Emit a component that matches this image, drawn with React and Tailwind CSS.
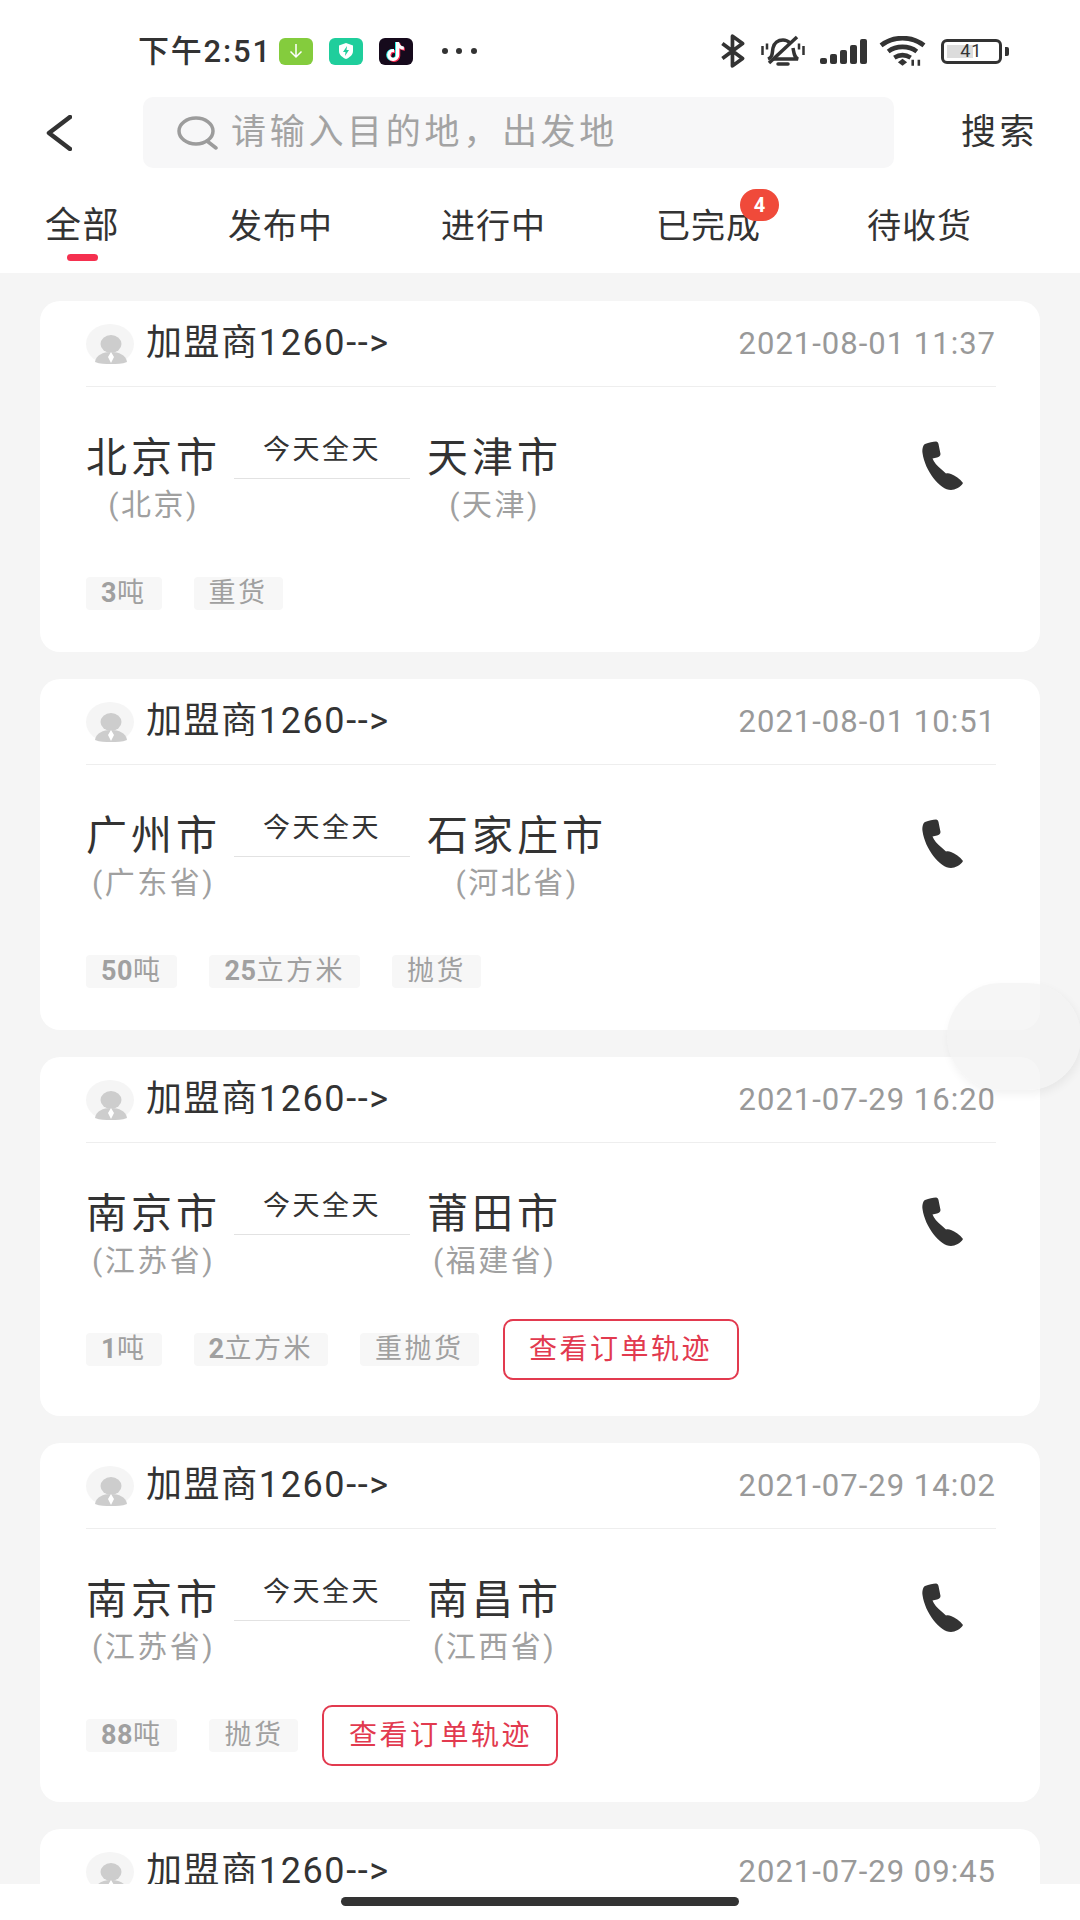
import { FaTiktok } from 'react-icons/fa';

const tabs = [
  { label: '全部', active: true, cls: 'text-[36px] tracking-[1.5px]' },
  { label: '发布中', cls: 'ml-[108px] text-[34px] tracking-[1px]' },
  { label: '进行中', cls: 'ml-[108px] text-[34px] tracking-[1px]' },
  { label: '已完成', cls: 'ml-[110px] text-[34px] tracking-[1px]', badge: 4 },
  { label: '待收货', cls: 'ml-[106px] text-[34px] tracking-[1px]' },
];

const orders = [
  { time: '2021-08-01 11:37', from: '北京市', fromSub: '(北京)', to: '天津市', toSub: '(天津)', tags: [['3', '吨'], ['', '重货']] },
  { time: '2021-08-01 10:51', from: '广州市', fromSub: '(广东省)', to: '石家庄市', toSub: '(河北省)', tags: [['50', '吨'], ['25', '立方米'], ['', '抛货']] },
  { time: '2021-07-29 16:20', from: '南京市', fromSub: '(江苏省)', to: '莆田市', toSub: '(福建省)', tags: [['1', '吨'], ['2', '立方米'], ['', '重抛货']], track: true },
  { time: '2021-07-29 14:02', from: '南京市', fromSub: '(江苏省)', to: '南昌市', toSub: '(江西省)', tags: [['88', '吨'], ['', '抛货']], track: true },
  { time: '2021-07-29 09:45', from: '南京市', fromSub: '(江苏省)', to: '南昌市', toSub: '(江西省)', tags: [] },
];

function StatusBar() {
  return (
    <div className="h-[97px] pt-[5px] flex items-center flex-none text-[#333]">
      <span className="ml-[138px] text-[31px] tracking-[1.8px] font-medium leading-none">下午2:51</span>
      <div className="ml-[7px] w-[34px] h-[27px] rounded-[6px] bg-[#84cc3d] flex items-center justify-center">
        <svg width="16" height="16" viewBox="0 0 16 16" fill="none" stroke="#fff" strokeWidth="1.5"><path d="M8 1v13M2.5 8.5 8 14l5.5-5.5" /></svg>
      </div>
      <div className="ml-[16px] w-[34px] h-[27px] rounded-[6px] bg-[#1fce9c] flex items-center justify-center">
        <svg width="16" height="18" viewBox="0 0 16 18"><path d="M8 1 15 3.5V9c0 4-3.5 6.500-7 8-3.500-1.500-7-4-7-8V3.500z" fill="#fff" /><path d="M9 4 5 10h2.500L7 14l4-6H8.500z" fill="#1fce9c" /></svg>
      </div>
      <div className="ml-[16px] w-[34px] h-[27px] rounded-[6px] bg-[#160a1c] relative flex items-center justify-center">
        <FaTiktok className="absolute text-[#25f4ee] text-[19px] -translate-x-[1px]" />
        <FaTiktok className="absolute text-[#fe2c55] text-[19px] translate-x-[1px] translate-y-[1px]" />
        <FaTiktok className="absolute text-white text-[19px]" />
      </div>
      <div className="ml-[29px] w-[35px] flex justify-between">
        <span className="w-[6px] h-[6px] rounded-full bg-[#333]"></span>
        <span className="w-[6px] h-[6px] rounded-full bg-[#333]"></span>
        <span className="w-[6px] h-[6px] rounded-full bg-[#333]"></span>
      </div>
      <svg className="ml-[243px]" width="26" height="34" viewBox="0 0 24 32" fill="none" stroke="#333" strokeWidth="3.5" strokeLinejoin="round"><path d="M2 9 21 23 11.500 30V2L21 9 2 23" /></svg>
      <svg className="ml-[15px]" width="44" height="32" viewBox="0 0 44 32" fill="none" stroke="#333" strokeWidth="3.5">
        <path d="M7 24c5-2 4-6 5-11 1-5 5-8 10-8 3 0 5 1 7 3M32 13c1 5 1 9 5 11H12" />
        <path d="M8 28 36 2" />
        <path d="M17 29h10" strokeWidth="3.500" strokeLinecap="round" />
        <path d="M1.500 11v9M6 8.500v6M38 8.500v6M42.500 11v9" strokeWidth="2.500" />
      </svg>
      <div className="ml-[15px] w-[47px] h-[25px] flex items-end justify-between">
        <span className="w-[7px] h-[6px] rounded-[2px] bg-[#333]"></span>
        <span className="w-[7px] h-[10px] rounded-[2px] bg-[#333]"></span>
        <span className="w-[7px] h-[14px] rounded-[2px] bg-[#333]"></span>
        <span className="w-[7px] h-[19px] rounded-[2px] bg-[#333]"></span>
        <span className="w-[7px] h-[25px] rounded-[2px] bg-[#333]"></span>
      </div>
      <svg className="ml-[12px]" width="47" height="31" viewBox="0 0 46 30" fill="none" stroke="#333" strokeWidth="4.500">
        <path d="M2 9c12-9.500 30-9.500 42 0" />
        <path d="M9 15c8-6 20-6 28 0" />
        <path d="M15 21c5-3 11-3 16 0" />
        <path d="M18.500 25.500 23 22l4.500 3.500-4.500 3.500z" fill="#333" stroke="none" />
        <path d="M33 23v6M39 23v6" strokeWidth="2.500" />
      </svg>
      <div className="ml-[15px] flex items-center">
        <div className="w-[61px] h-[25px] border-[3px] border-[#333] rounded-[6px] relative overflow-hidden">
          <div className="absolute left-[3px] top-[3px] bottom-[3px] w-[26px] bg-[#dcdcdc]"></div>
          <div className="absolute inset-0 flex items-center justify-center text-[18px] leading-none text-[#333] tracking-[1px]">41</div>
        </div>
        <div className="ml-[3px] w-[4px] h-[9px] rounded-r-[2px] bg-[#333]"></div>
      </div>
    </div>
  );
}

function SearchRow() {
  return (
    <div className="h-[71px] flex items-center flex-none">
      <svg className="ml-[46px]" width="26" height="36" viewBox="0 0 26 36" fill="none" stroke="#333" strokeWidth="4.500" strokeLinecap="round" strokeLinejoin="round"><path d="M24 2 3 18l21 16" /></svg>
      <div className="ml-[71px] w-[751px] h-[71px] rounded-[10px] bg-[#f7f7f8] flex items-center">
        <svg className="ml-[34px]" width="41" height="34" viewBox="0 0 41 34" fill="none" stroke="#9c9c9c" strokeWidth="3.500"><ellipse cx="19" cy="15" rx="17" ry="13" /><path d="M30 25l9 7" strokeLinecap="round" /></svg>
        <span className="ml-[13px] text-[35px] tracking-[3.700px] text-[#a3a3a3] leading-none">请输入目的地，出发地</span>
      </div>
      <span className="ml-[67px] text-[35px] tracking-[3.500px] text-[#333] leading-none">搜索</span>
    </div>
  );
}

function Tabs() {
  return (
    <div className="flex pl-[45px] pt-[40px] pb-[12px] flex-none">
      {tabs.map((tab) => (
        <div key={tab.label} className="relative flex flex-col items-center">
          <span className={`leading-[36px] text-[#333] ${tab.cls}`}>{tab.label}</span>
          <span className={`mt-[10px] w-[31px] h-[7px] rounded-full ${tab.active ? 'bg-[#f5304f]' : 'bg-transparent'}`}></span>
          {tab.badge && (
            <span className="absolute right-[-18px] -top-[19px] w-[39px] h-[32px] rounded-full bg-[#f04a3a] text-white text-[20px] font-bold flex items-center justify-center leading-none">{tab.badge}</span>
          )}
        </div>
      ))}
    </div>
  );
}

function Avatar() {
  return (
    <svg width="48" height="40" viewBox="0 0 48 40" className="flex-none">
      <ellipse cx="24" cy="20" rx="24" ry="20" fill="#f5f5f5" />
      <ellipse cx="25" cy="20" rx="10.500" ry="9" fill="#cdcdcd" />
      <path d="M9 38c1-7 8-10 16-10s15 3 16 10c-5 2-10 2-16 2s-11 0-16-2z" fill="#cdcdcd" />
      <path d="M25 28l3 5-3 6-3-6z" fill="#fff" />
    </svg>
  );
}

function PhoneIcon() {
  return (
    <svg width="41" height="49" viewBox="0 0 41 49" fill="#333">
      <path d="M3 3C7 1.500 11 .5 14 .5c1.500 0 2 1 2.500 2.500l2 10c0 2-1.500 3-3.500 3.500l-4.500 1c1.500 3.500 4.500 7.500 8.500 10.500l5 4.500c1.500-.5 3-.5 5 .5 4 1.500 9 5 12 9-2 4-8 7-12 7C18 49 3 30 .5 12 0 8 1 4 3 3z" />
    </svg>
  );
}

function OrderCard({ order }) {
  return (
    <div className="bg-white rounded-[20px] flex-none">
      <div className="mx-[46px] mr-[44px] h-[86px] border-b border-[#eeeeee] flex items-center justify-between">
        <div className="flex items-center">
          <Avatar />
          <span className="ml-[12px] -mt-[1px] text-[36px] tracking-[1.600px] text-[#333] leading-none">加盟商1260--&gt;</span>
        </div>
        <span className="-mt-[1px] text-[31px] tracking-[1px] text-[#999] leading-none">{order.time}</span>
      </div>
      <div className="mt-[48px] ml-[46px] mr-[77px] flex justify-between items-start">
        <div className="flex items-start">
          <div className="flex flex-col items-center">
            <span className="text-[41px] tracking-[4px] leading-[46px] text-[#333]">{order.from}</span>
            <span className="mt-[4px] text-[30px] tracking-[2.500px] leading-[40px] text-[#a0a0a0]">{order.fromSub}</span>
          </div>
          <div className="ml-[13px] -mt-[1px] w-[176px] h-[45px] border-b border-[#e2e2e2] text-center text-[27px] tracking-[2.500px] leading-[32px] text-[#333]">今天全天</div>
          <div className="ml-[17px] flex flex-col items-center">
            <span className="text-[41px] tracking-[4px] leading-[46px] text-[#333]">{order.to}</span>
            <span className="mt-[4px] text-[30px] tracking-[2.500px] leading-[40px] text-[#a0a0a0]">{order.toSub}</span>
          </div>
        </div>
        <div className="mt-[6px]"><PhoneIcon /></div>
      </div>
      <div className={`ml-[46px] flex items-center ${order.track ? 'mt-[38px] pb-[36px]' : 'mt-[52px] pb-[42px]'}`}>
        {order.tags.map(([num, text], i) => (
          <span key={text} className={`h-[33px] px-[15px] rounded-[4px] bg-[#f7f7f7] text-[27px] tracking-[2.500px] leading-none text-[#a0a0a0] flex items-center ${i > 0 ? 'ml-[32px]' : ''}`}>
            <b className="font-bold tracking-[0.500px]">{num}</b>{text}
          </span>
        ))}
        {order.track && (
          <span className="ml-[24px] w-[236px] h-[61px] rounded-[10px] border-2 border-[#e23a4f] text-[#e23a4f] text-[28px] tracking-[2.500px] leading-none flex items-center justify-center">查看订单轨迹</span>
        )}
      </div>
    </div>
  );
}

export default function App() {
  return (
    <div className="relative w-[1080px] h-[1920px] overflow-hidden bg-[#f5f5f5] flex flex-col font-['Roboto','Noto_Sans_CJK_SC',sans-serif]">
      <div className="bg-white flex-none flex flex-col">
        <StatusBar />
        <SearchRow />
        <Tabs />
      </div>
      <div className="flex-1 overflow-hidden px-[40px] pt-[28px] flex flex-col gap-[27px]">
        {orders.map((order) => (
          <OrderCard key={order.time} order={order} />
        ))}
      </div>
      <div className="h-[36px] bg-white flex-none flex justify-center pt-[13px]">
        <div className="w-[398px] h-[9px] rounded-full bg-[#333]"></div>
      </div>
      {/* floating ball on the right edge */}
      <div className="absolute left-[947px] top-[983px] w-[134px] h-[107px] rounded-full bg-[#f2f2f2]/70 shadow-[2px_4px_10px_rgba(0,0,0,0.06)]"></div>
    </div>
  );
}
